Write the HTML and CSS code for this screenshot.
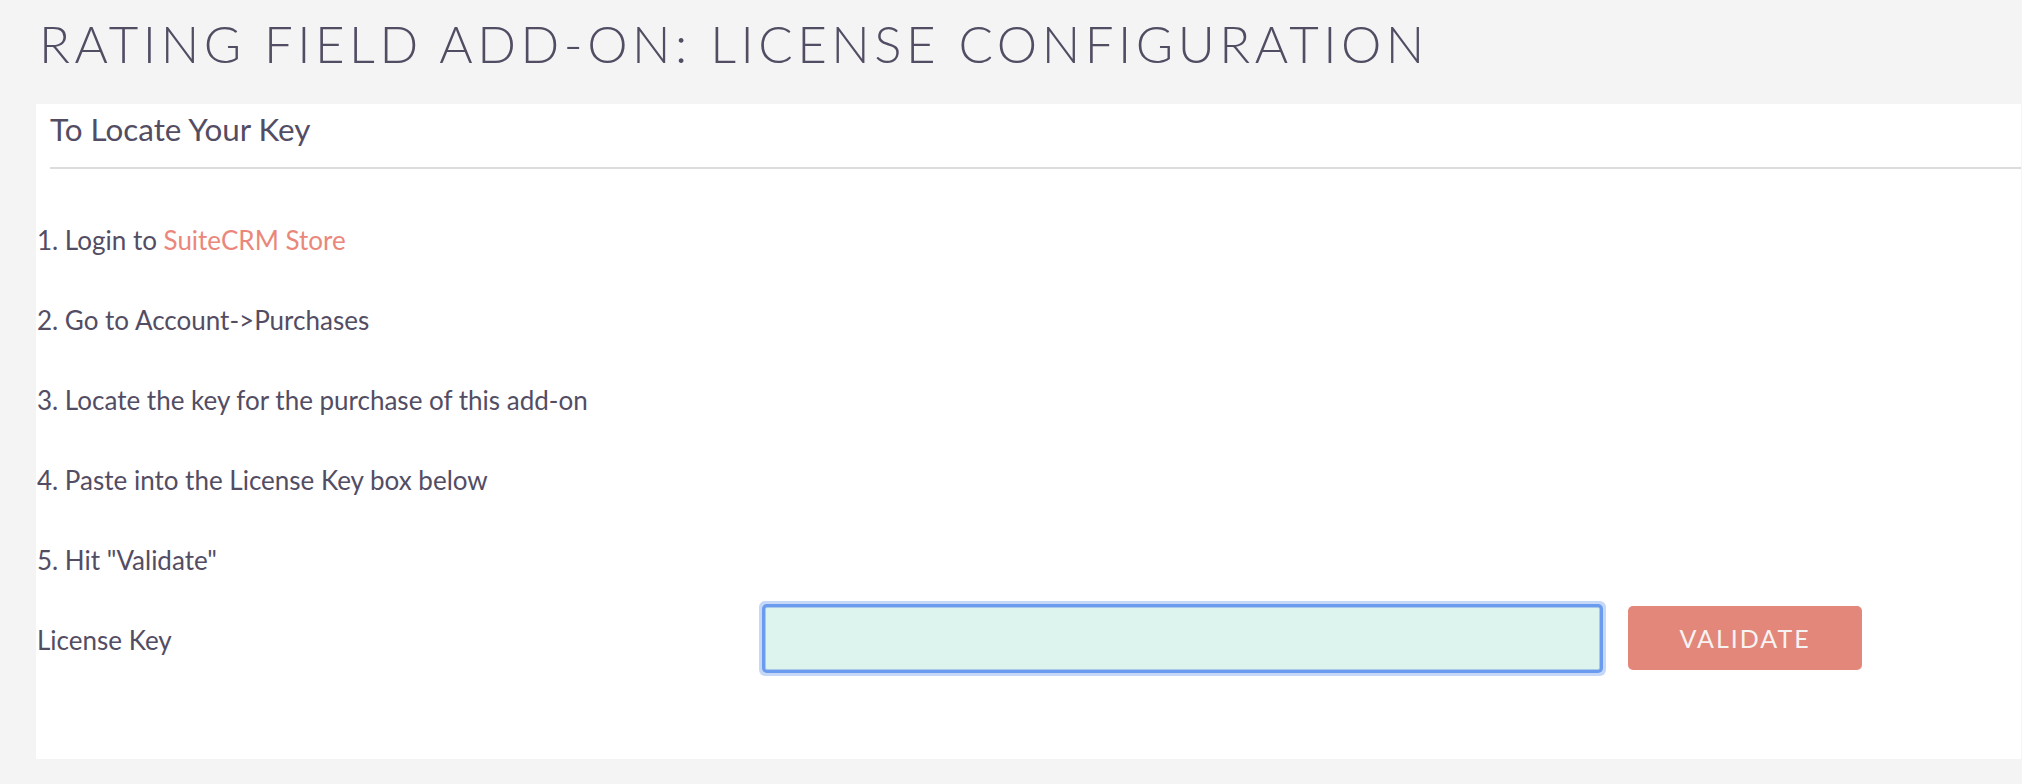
FILE: index.html
```html
<!DOCTYPE html>
<html lang="en">
<head>
    <meta charset="UTF-8">
    <title>Rating Field Add-On: License Configuration</title>
    <link rel="stylesheet" href="styles.css">
</head>
<body>
    <h1 class="page-title">Rating Field Add-On: License Configuration</h1>

    <div class="panel">
        <h3 class="panel-heading">To Locate Your Key</h3>

        <div class="steps">
            <p>1. Login to <a href="#">SuiteCRM Store</a></p>
            <p>2. Go to Account-&gt;Purchases</p>
            <p>3. Locate the key for the purchase of this add-on</p>
            <p>4. Paste into the License Key box below</p>
            <p>5. Hit "Validate"</p>
        </div>

        <div class="license-row">
            <label for="license_key">License Key</label>
            <input type="text" id="license_key" name="license_key">
            <button type="button">Validate</button>
        </div>
    </div>
</body>
</html>
```

FILE: styles.css
```css
body {
    margin: 0;
    padding: 0;
    background-color: #f4f4f4;
    font-family: "Lato", "Liberation Sans", sans-serif;
    color: #534d64;
}
.page-title {
    margin: 0 0 30px 39px;
    padding-top: 13px;
    font-size: 51px;
    font-weight: 300;
    line-height: 1.2;
    letter-spacing: 4.5px;
    text-transform: uppercase;
}
.panel {
    margin: 0 1px 0 36px;
    padding: 0 0 89px 1px;
    background-color: #fff;
}
.panel-heading {
    margin: 0 0 0 13px;
    padding: 6px 0 19px 0;
    font-size: 31.4px;
    font-weight: 400;
    border-bottom: 2px solid #dcdcdc;
}
.steps {
    margin-top: 31px;
}
.steps p {
    margin: 0;
    font-size: 26px;
    line-height: 80px;
}
.steps a {
    color: #ea877b;
    text-decoration: none;
}
.license-row {
    display: flex;
    align-items: center;
    margin-top: 6px;
}
.license-row label {
    flex: 0 0 728px;
    margin-top: 4px;
    font-size: 26px;
}
.license-row input {
    width: 835px;
    height: 63px;
    box-sizing: border-box;
    border: 1px solid #a9c9ea;
    border-radius: 2px;
    background-color: #ddf3ed;
    box-shadow: 0 0 0 3px #6a9bee, 0 0 0 6px #c6d8f7;
    outline: none;
}
.license-row button {
    margin-left: 28px;
    width: 234px;
    height: 64px;
    border: none;
    border-radius: 5px;
    background-color: #e3877b;
    color: #f7f3f2;
    font-family: "Lato", "Liberation Sans", sans-serif;
    font-size: 25px;
    letter-spacing: 2px;
    text-transform: uppercase;
}
```
